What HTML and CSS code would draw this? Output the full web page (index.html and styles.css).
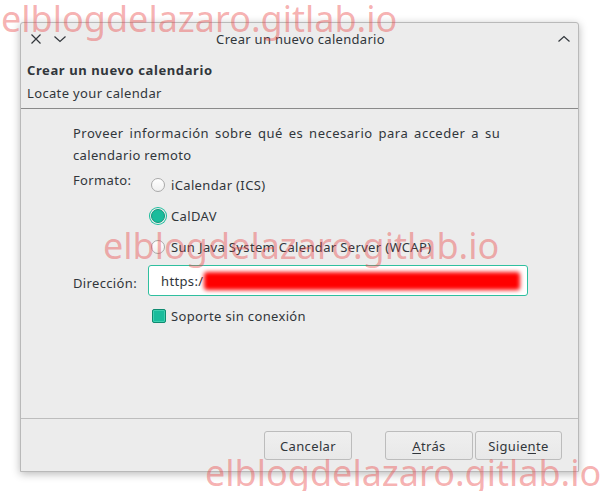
FILE: index.html
```html
<!DOCTYPE html>
<html lang="es">
<head>
<meta charset="utf-8">
<title>Crear un nuevo calendario</title>
<link rel="stylesheet" href="styles.css">
</head>
<body>
<div class="window">
  <div class="titlebar">
    <div class="tb-left">
      <svg class="tb-icon" width="12" height="12" viewBox="0 0 12 12"><path d="M1.5 1.5 L10.5 10.5 M10.5 1.5 L1.5 10.5" stroke="#31363b" stroke-width="1.2" fill="none"/></svg>
      <svg class="tb-icon" width="14" height="12" viewBox="0 0 14 12"><path d="M1.5 3.5 L7 8.5 L12.5 3.5" stroke="#31363b" stroke-width="1.2" fill="none"/></svg>
    </div>
    <div class="tb-title">Crear un nuevo calendario</div>
    <div class="tb-right">
      <svg class="tb-icon" width="14" height="12" viewBox="0 0 14 12"><path d="M1.5 8.5 L7 3.5 L12.5 8.5" stroke="#31363b" stroke-width="1.2" fill="none"/></svg>
    </div>
  </div>
  <div class="header">
    <div class="h-title">Crear un nuevo calendario</div>
    <div class="h-sub">Locate your calendar</div>
  </div>
  <div class="content">
    <p class="intro"><span class="intro-1">Proveer información sobre qué es necesario para acceder a su</span><br>calendario remoto</p>
    <div class="form">
      <div class="lbl lbl-top">Formato:</div>
      <div class="radios">
        <div class="radio-row"><span class="radio"></span><span>iCalendar (ICS)</span></div>
        <div class="radio-row"><span class="radio checked"></span><span>CalDAV</span></div>
        <div class="radio-row"><span class="radio"></span><span>Sun Java System Calendar Server (WCAP)</span></div>
      </div>
      <div class="lbl lbl-mid">Dirección:</div>
      <div class="input"><span>https:/</span><span class="redact"></span></div>
      <div></div>
      <div class="check-row"><span class="checkbox"></span><span>Soporte sin conexión</span></div>
    </div>
  </div>
  <div class="footer">
    <button class="btn">Cancelar</button>
    <div class="btn-pair">
      <button class="btn"><u>A</u>trás</button>
      <button class="btn btn-next">Siguie<u>n</u>te</button>
    </div>
  </div>
</div>
<div class="wm wm-1">elblogdelazaro.gitlab.io</div>
<div class="wm wm-2">elblogdelazaro.gitlab.io</div>
<div class="wm wm-3">elblogdelazaro.gitlab.io</div>
</body>
</html>
```
FILE: styles.css
```css
html, body {
  margin: 0;
  padding: 0;
  background: #ffffff;
  width: 600px;
  height: 491px;
  overflow: hidden;
  position: relative;
}
body {
  font-family: "Noto Sans", "Open Sans", sans-serif;
  font-size: 13px;
  letter-spacing: 0.35px;
  color: #31363b;
}
.window {
  box-sizing: border-box;
  margin: 22px 0 0 20px;
  width: 559px;
  height: 450px;
  background: #ececec;
  border: 1px solid #b9b9b9;
  border-radius: 3px 3px 0 0;
  box-shadow: 0 2px 9px rgba(0, 0, 0, 0.28);
  display: flex;
  flex-direction: column;
}
.titlebar {
  height: 32px;
  display: flex;
  align-items: center;
  padding: 0 7px 0 9px;
}
.tb-left {
  display: flex;
  align-items: center;
  gap: 11px;
  width: 120px;
}
.tb-icon { display: block; }
.tb-title {
  flex: 1;
  text-align: center;
  letter-spacing: 0.3px;
}
.tb-right {
  width: 120px;
  display: flex;
  justify-content: flex-end;
}
.header {
  padding: 5px 6px 5px 6px;
  border-bottom: 1px solid #8a8a8a;
  line-height: 20px;
}
.h-title {
  font-weight: bold;
  letter-spacing: 0.6px;
  margin-bottom: 3px;
}
.h-sub { letter-spacing: 0.35px; }
.content {
  flex: 1;
  padding: 13px 0 0 52px;
}
.intro {
  margin: 0;
  line-height: 22px;
}
.intro-1 { word-spacing: 2px; letter-spacing: 0.5px; }
.form {
  display: grid;
  grid-template-columns: 75px 380px;
  margin-top: 3px;
}
.lbl { line-height: 22px; }
.lbl-top { align-self: start; }
.lbl-mid { align-self: center; margin-top: 5px; padding-top: 2px; }
.radios { display: flex; flex-direction: column; }
.radio-row {
  height: 31px;
  display: flex;
  align-items: center;
  gap: 6px;
  padding-left: 3px;
}
.radio {
  box-sizing: border-box;
  width: 14px;
  height: 14px;
  border-radius: 50%;
  border: 1px solid #a9a9a9;
  background: linear-gradient(#ffffff, #f0f0f0);
  flex: none;
}
.radio.checked {
  background: #1abc9c;
  border: 1px solid #11967b;
  box-shadow: 0 0 0 1px #ececec, 0 0 0 2px #1abc9c;
}
.input {
  box-sizing: border-box;
  margin-top: 3px;
  height: 31px;
  background: #ffffff;
  border: 1px solid #2fbf9f;
  border-radius: 3px;
  display: flex;
  align-items: center;
  padding-left: 12px;
}
.redact {
  display: block;
  margin-left: 1px;
  width: 316px;
  height: 18px;
  background: #ff0000;
  filter: blur(2px);
  border-radius: 3px;
}
.check-row {
  margin-top: 9px;
  height: 22px;
  display: flex;
  align-items: center;
  gap: 5px;
  padding-left: 4px;
}
.checkbox {
  box-sizing: border-box;
  width: 14px;
  height: 14px;
  border-radius: 2px;
  background: #1abc9c;
  border: 1px solid #0f8a70;
  box-shadow: inset 0 0 0 1px #3fd0b0;
  flex: none;
}
.footer {
  border-top: 1px solid #bdbdbd;
  padding: 12px 16px 11px 0;
  display: flex;
  justify-content: flex-end;
  gap: 33px;
}
.btn-pair { display: flex; gap: 2px; }
.btn {
  box-sizing: border-box;
  width: 88px;
  height: 29px;
  font-family: "Noto Sans", "Open Sans", sans-serif;
  font-size: 13px;
  letter-spacing: 0.35px;
  color: #31363b;
  background: linear-gradient(#efefef, #e8e8e8);
  border: 1px solid #bcbcbc;
  border-radius: 3px;
  padding: 0;
}
.btn-next { width: 87px; }
.btn u { text-decoration-thickness: 1px; text-underline-offset: 2px; }
.wm {
  position: absolute;
  font-family: "Noto Sans", sans-serif;
  font-size: 36px;
  line-height: 1;
  letter-spacing: 0;
  color: rgba(235, 70, 70, 0.42);
  white-space: nowrap;
  pointer-events: none;
}
.wm-1 { left: 1px; top: 1px; }
.wm-2 { left: 103px; top: 228px; }
.wm-3 { left: 205px; top: 455px; }
```
